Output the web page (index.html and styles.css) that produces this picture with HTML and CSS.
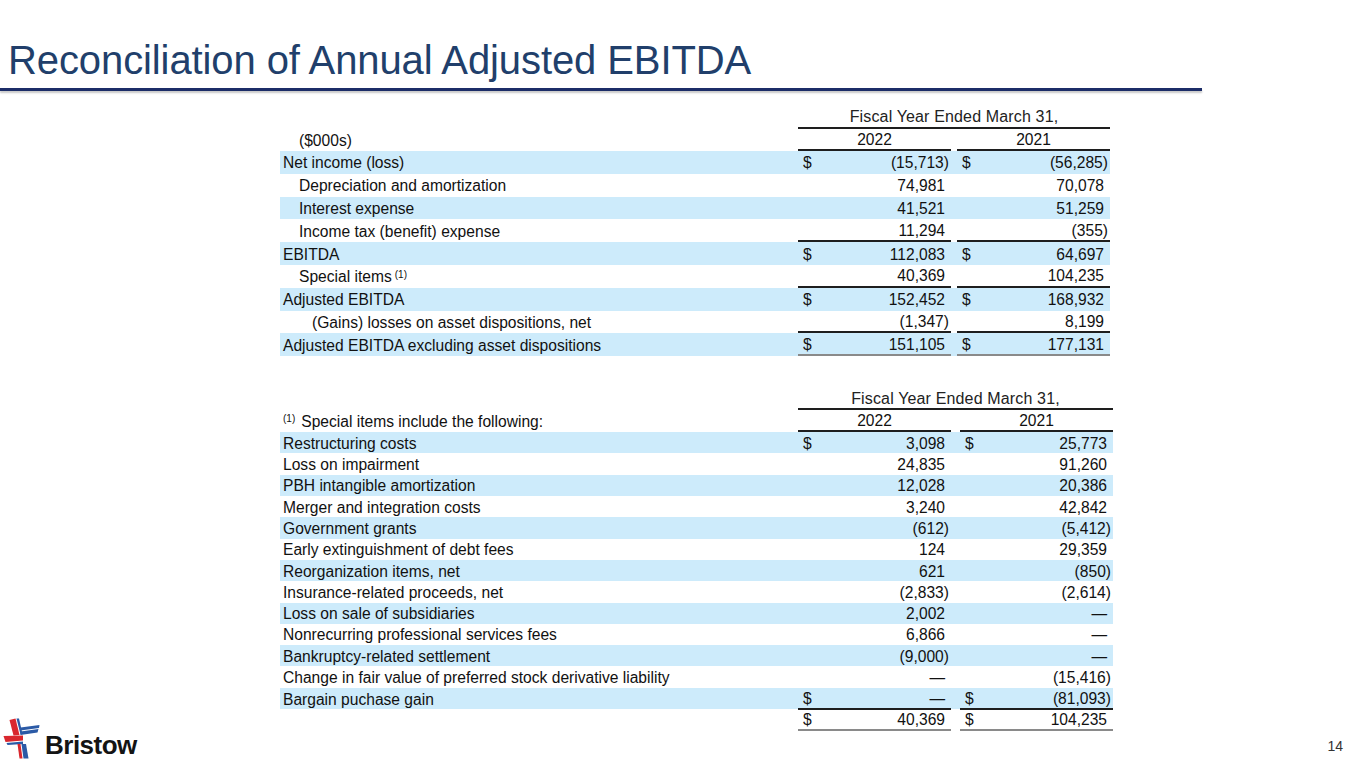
FILE: index.html
```html
<!DOCTYPE html>
<html lang="en">
<head>
<meta charset="utf-8">
<title>Reconciliation of Annual Adjusted EBITDA</title>
<link rel="stylesheet" href="styles.css">
</head>
<body>
<header class="title-bar">
  <h1 class="title">Reconciliation of Annual Adjusted EBITDA</h1>
</header>
<div class="rule"></div>
<main class="content">
  <aside class="left">
    <div class="logo">
      <svg class="logo-mark" viewBox="0 0 42 44" width="42" height="44" aria-hidden="true">
        <polygon fill="#d9272e" points="8.5,4 14.5,2.5 18.5,19 12.5,19.5"/>
        <polygon fill="#2b5aa6" points="15.5,2.5 18,2.5 21.5,18 19.5,18.5"/>
        <polygon fill="#2b5aa6" points="19.5,11.5 38.5,9 38,12 19.5,14.5"/>
        <polygon fill="#2b5aa6" points="19.5,15.5 37.5,13 36.5,16.5 19.5,19"/>
        <polygon fill="#d9272e" points="2.5,20 22,19.5 22,24.5 4.5,26"/>
        <polygon fill="#2b5aa6" points="5.5,27 22,25.5 22,28 6.5,29"/>
        <polygon fill="#d9272e" points="16.5,28 19.5,28 21.5,42.5 18.5,42.5"/>
        <polygon fill="#2b5aa6" points="20.5,28 25,28 27.5,42.5 22.5,42.5"/>
      </svg>
      <span class="logo-text">Bristow</span>
    </div>
  </aside>

  <section class="tables">
    <div class="tbl t1">
      <div class="row hdr">
        <div class="lbl"></div>
        <div class="span u">Fiscal Year Ended March 31,</div>
      </div>
      <div class="row yrs">
        <div class="lbl ind">($000s)</div>
        <div class="yr u">2022</div><div class="sp"></div><div class="yr u">2021</div>
      </div>
      <div class="row data shade">
        <div class="lbl">Net income (loss)</div>
        <div class="val"><span class="cur">$</span><span class="num neg">(15,713)</span></div><div class="sp"></div>
        <div class="val"><span class="cur">$</span><span class="num neg">(56,285)</span></div>
      </div>
      <div class="row data">
        <div class="lbl ind">Depreciation and amortization</div>
        <div class="val"><span class="num">74,981</span></div><div class="sp"></div>
        <div class="val"><span class="num">70,078</span></div>
      </div>
      <div class="row data shade">
        <div class="lbl ind">Interest expense</div>
        <div class="val"><span class="num">41,521</span></div><div class="sp"></div>
        <div class="val"><span class="num">51,259</span></div>
      </div>
      <div class="row data">
        <div class="lbl ind">Income tax (benefit) expense</div>
        <div class="val u"><span class="num">11,294</span></div><div class="sp"></div>
        <div class="val u"><span class="num neg">(355)</span></div>
      </div>
      <div class="row data shade">
        <div class="lbl">EBITDA</div>
        <div class="val"><span class="cur">$</span><span class="num">112,083</span></div><div class="sp"></div>
        <div class="val"><span class="cur">$</span><span class="num">64,697</span></div>
      </div>
      <div class="row data">
        <div class="lbl ind">Special items <sup class="note">(1)</sup></div>
        <div class="val u"><span class="num">40,369</span></div><div class="sp"></div>
        <div class="val u"><span class="num">104,235</span></div>
      </div>
      <div class="row data shade">
        <div class="lbl">Adjusted EBITDA</div>
        <div class="val"><span class="cur">$</span><span class="num">152,452</span></div><div class="sp"></div>
        <div class="val"><span class="cur">$</span><span class="num">168,932</span></div>
      </div>
      <div class="row data">
        <div class="lbl ind2">(Gains) losses on asset dispositions, net</div>
        <div class="val u"><span class="num neg">(1,347)</span></div><div class="sp"></div>
        <div class="val u"><span class="num">8,199</span></div>
      </div>
      <div class="row data shade">
        <div class="lbl">Adjusted EBITDA excluding asset dispositions</div>
        <div class="val tot"><span class="cur">$</span><span class="num">151,105</span></div><div class="sp"></div>
        <div class="val tot"><span class="cur">$</span><span class="num">177,131</span></div>
      </div>
    </div>

    <div class="tbl t2">
      <div class="row hdr">
        <div class="lbl"></div>
        <div class="span u">Fiscal Year Ended March 31,</div>
      </div>
      <div class="row yrs">
        <div class="lbl"><sup class="fn">(1)</sup>Special items include the following:</div>
        <div class="yr u">2022</div><div class="sp"></div><div class="yr u">2021</div>
      </div>
      <div class="row data shade">
        <div class="lbl">Restructuring costs</div>
        <div class="val"><span class="cur">$</span><span class="num">3,098</span></div><div class="sp"></div>
        <div class="val"><span class="cur">$</span><span class="num">25,773</span></div>
      </div>
      <div class="row data">
        <div class="lbl">Loss on impairment</div>
        <div class="val"><span class="num">24,835</span></div><div class="sp"></div>
        <div class="val"><span class="num">91,260</span></div>
      </div>
      <div class="row data shade">
        <div class="lbl">PBH intangible amortization</div>
        <div class="val"><span class="num">12,028</span></div><div class="sp"></div>
        <div class="val"><span class="num">20,386</span></div>
      </div>
      <div class="row data">
        <div class="lbl">Merger and integration costs</div>
        <div class="val"><span class="num">3,240</span></div><div class="sp"></div>
        <div class="val"><span class="num">42,842</span></div>
      </div>
      <div class="row data shade">
        <div class="lbl">Government grants</div>
        <div class="val"><span class="num neg">(612)</span></div><div class="sp"></div>
        <div class="val"><span class="num neg">(5,412)</span></div>
      </div>
      <div class="row data">
        <div class="lbl">Early extinguishment of debt fees</div>
        <div class="val"><span class="num">124</span></div><div class="sp"></div>
        <div class="val"><span class="num">29,359</span></div>
      </div>
      <div class="row data shade">
        <div class="lbl">Reorganization items, net</div>
        <div class="val"><span class="num">621</span></div><div class="sp"></div>
        <div class="val"><span class="num neg">(850)</span></div>
      </div>
      <div class="row data">
        <div class="lbl">Insurance-related proceeds, net</div>
        <div class="val"><span class="num neg">(2,833)</span></div><div class="sp"></div>
        <div class="val"><span class="num neg">(2,614)</span></div>
      </div>
      <div class="row data shade">
        <div class="lbl">Loss on sale of subsidiaries</div>
        <div class="val"><span class="num">2,002</span></div><div class="sp"></div>
        <div class="val"><span class="num">—</span></div>
      </div>
      <div class="row data">
        <div class="lbl">Nonrecurring professional services fees</div>
        <div class="val"><span class="num">6,866</span></div><div class="sp"></div>
        <div class="val"><span class="num">—</span></div>
      </div>
      <div class="row data shade">
        <div class="lbl">Bankruptcy-related settlement</div>
        <div class="val"><span class="num neg">(9,000)</span></div><div class="sp"></div>
        <div class="val"><span class="num">—</span></div>
      </div>
      <div class="row data">
        <div class="lbl">Change in fair value of preferred stock derivative liability</div>
        <div class="val"><span class="num">—</span></div><div class="sp"></div>
        <div class="val"><span class="num neg">(15,416)</span></div>
      </div>
      <div class="row data shade">
        <div class="lbl">Bargain puchase gain</div>
        <div class="val u"><span class="cur">$</span><span class="num">—</span></div><div class="sp"></div>
        <div class="val u"><span class="cur">$</span><span class="num neg">(81,093)</span></div>
      </div>
      <div class="row data total">
        <div class="lbl"></div>
        <div class="val tot"><span class="cur">$</span><span class="num">40,369</span></div><div class="sp"></div>
        <div class="val tot"><span class="cur">$</span><span class="num">104,235</span></div>
      </div>
    </div>
  </section>

  <aside class="right">
    <span class="page">14</span>
  </aside>
</main>
</body>
</html>
```

FILE: styles.css
```css
* { box-sizing: border-box; }

html, body {
  margin: 0;
  padding: 0;
  background: #ffffff;
}

body {
  width: 1365px;
  height: 768px;
  overflow: hidden;
  font-family: "Liberation Sans", Arial, sans-serif;
  color: #111111;
}

.title-bar {
  padding: 37px 0 0 8px;
}

.title {
  margin: 0;
  font-size: 40px;
  line-height: 46px;
  font-weight: normal;
  color: #213f6b;
  letter-spacing: -0.1px;
  white-space: nowrap;
}

.rule {
  margin-top: 5px;
  width: 1202px;
  height: 3px;
  background: #1c2d68;
  box-shadow: 0 2px 2px rgba(0, 0, 0, 0.22);
}

.content {
  display: flex;
  height: 677px;
}

.left {
  width: 280px;
  flex: none;
  display: flex;
  flex-direction: column;
  justify-content: flex-end;
  padding: 0 0 8px 1px;
}

.logo {
  display: flex;
  align-items: flex-end;
  gap: 2px;
}

.logo-mark {
  display: block;
  flex: none;
}

.logo-text {
  font-family: "Liberation Sans", Arial, sans-serif;
  font-weight: bold;
  font-size: 26px;
  line-height: 26px;
  letter-spacing: -0.5px;
  color: #141414;
  padding-bottom: 2px;
}

.tables {
  width: 833px;
  flex: none;
  padding-top: 15px;
  font-size: 15.6px;
}

.right {
  flex: 1;
  display: flex;
  flex-direction: column;
  justify-content: flex-end;
  align-items: flex-end;
  padding: 0 22px 14px 0;
}

.page {
  font-size: 14px;
  color: #333333;
}

/* tables */
.tbl {
  width: 830px;
}

.t2 {
  width: 833px;
  margin-top: 32px;
}

.row {
  display: grid;
  grid-template-columns: 518px 153px 6px 153px;
  align-items: stretch;
  white-space: nowrap;
}

.t2 .row {
  grid-template-columns: 518px 153px 9px 153px;
}

.row.hdr {
  height: 23px;
}

.t2 .row.hdr {
  height: 22px;
}

.row.yrs {
  height: 22px;
}

.row.data {
  height: 22.8px;
}

.t2 .row.data {
  height: 21.3px;
}

.t2 .row.total {
  height: 21px;
}

.shade {
  background: #cdebfb;
}

.lbl {
  display: flex;
  align-items: center;
  padding-left: 3px;
  padding-top: 2px;
}

.lbl.ind {
  padding-left: 19px;
}

.lbl.ind2 {
  padding-left: 32px;
}

.note {
  font-size: 10px;
  margin-left: 3px;
  align-self: flex-start;
  margin-top: 2px;
}

.fn {
  font-size: 10px;
  margin-right: 6px;
  align-self: flex-start;
  margin-top: 1px;
}

.span {
  grid-column: 2 / 5;
  display: flex;
  align-items: center;
  justify-content: center;
  font-size: 16px;
  letter-spacing: 0.15px;
  color: #222222;
  padding-top: 1px;
}

.yr {
  display: flex;
  align-items: center;
  justify-content: center;
  padding-top: 1px;
}

.u {
  border-bottom: 2px solid #1e1e1e;
}

.val {
  display: flex;
  align-items: center;
  padding: 2px 2px 0 5px;
}

.val.tot {
  border-bottom: 2px solid #8a8a8a;
}

.cur {
  flex: none;
}

.num {
  margin-left: auto;
  padding-right: 4px;
}

.num.neg {
  padding-right: 0;
}
```
